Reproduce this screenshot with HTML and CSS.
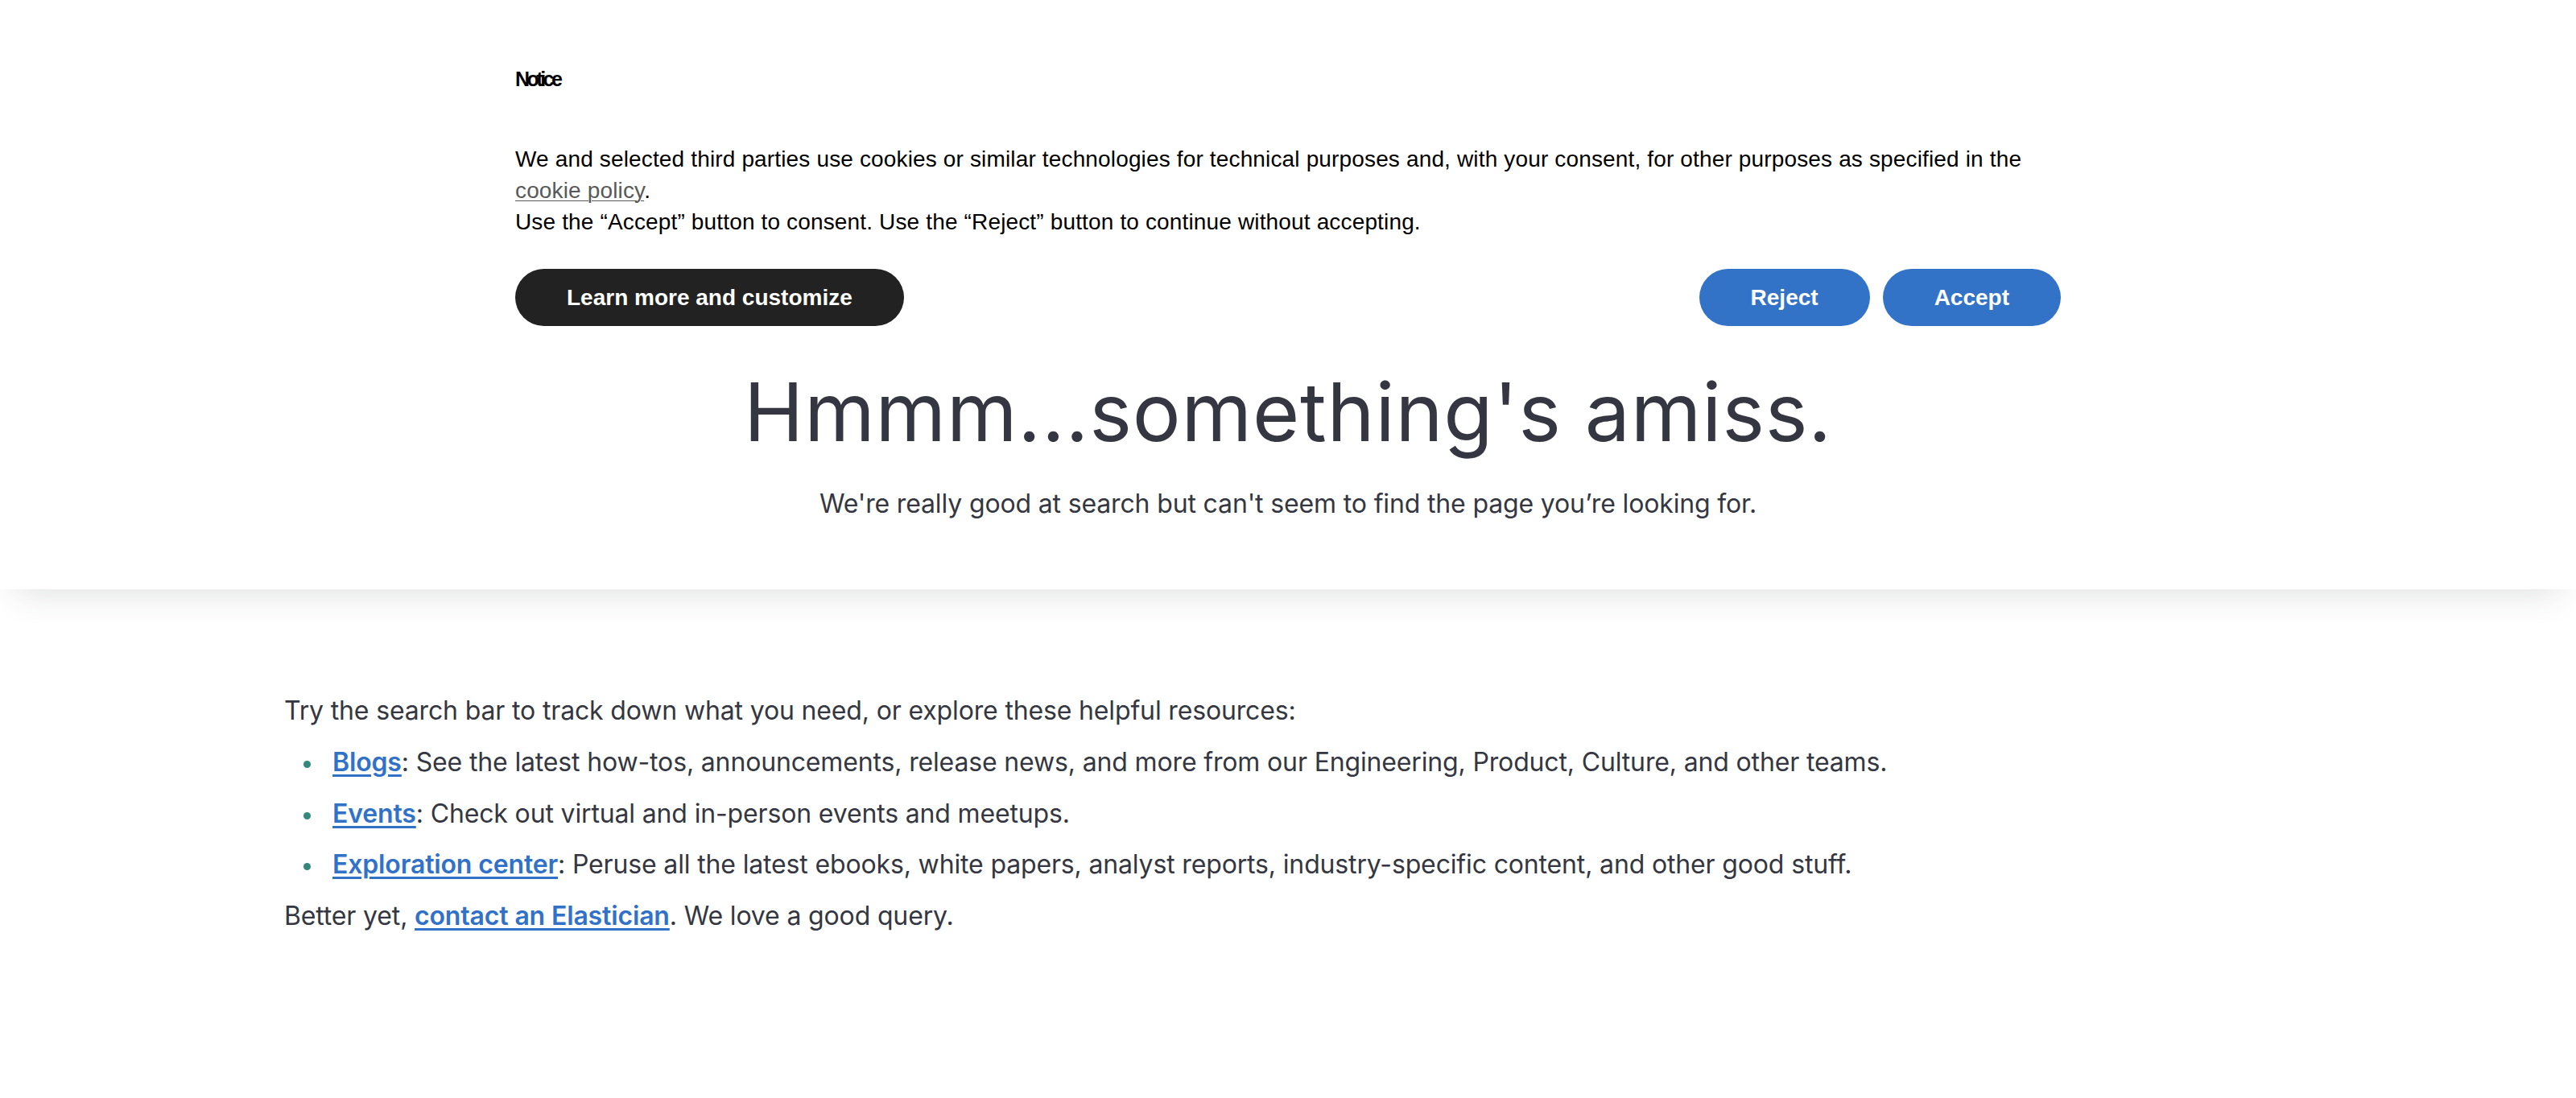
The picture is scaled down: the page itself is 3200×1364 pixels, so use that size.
FILE: index.html
```html
<!DOCTYPE html>
<html lang="en">
<head>
<meta charset="utf-8">
<title>Page not found</title>
<link rel="stylesheet" href="styles.css">
</head>
<body>
  <div class="cookie">
    <div class="cookie-inner">
      <p class="notice">Notice</p>
      <p class="cookie-text">We and selected third parties use cookies or similar technologies for technical purposes and, with your consent, for other purposes as specified in the <a class="cookie-link" href="#">cookie policy</a>.<br>Use the “Accept” button to consent. Use the “Reject” button to continue without accepting.</p>
      <div class="cookie-actions">
        <button class="btn btn-dark">Learn more and customize</button>
        <div class="btn-group">
          <button class="btn btn-blue">Reject</button>
          <button class="btn btn-blue">Accept</button>
        </div>
      </div>
    </div>
  </div>

  <section class="hero">
    <h1 class="hero-title">Hmmm...something's amiss.</h1>
    <p class="hero-sub">We're really good at search but can't seem to find the page you’re looking for.</p>
  </section>

  <main class="content">
    <p class="line">Try the search bar to track down what you need, or explore these helpful resources:</p>
    <ul class="resources">
      <li class="line"><a class="link" href="#">Blogs</a>: See the latest how-tos, announcements, release news, and more from our Engineering, Product, Culture, and other teams.</li>
      <li class="line"><a class="link" href="#">Events</a>: Check out virtual and in-person events and meetups.</li>
      <li class="line"><a class="link" href="#">Exploration center</a>: Peruse all the latest ebooks, white papers, analyst reports, industry-specific content, and other good stuff.</li>
    </ul>
    <p class="line">Better yet, <a class="link" href="#">contact an Elastician</a>. We love a good query.</p>
  </main>
</body>
</html>
```

FILE: styles.css
```css
html, body {
  margin: 0;
  padding: 0;
  background: #ffffff;
}

body {
  font-family: Inter, "Noto Sans", sans-serif;
  color: #343741;
}

/* Cookie notice */
.cookie {
  padding-top: 83px;
  font-family: "Liberation Sans", Arial, sans-serif;
  color: #000000;
}

.cookie-inner {
  width: 1920px;
  margin: 0 auto;
}

.notice {
  margin: 0;
  font-size: 25px;
  line-height: 30px;
  font-weight: 700;
  letter-spacing: -3.5px;
}

.cookie-text {
  margin: 65px 0 0;
  font-size: 28px;
  line-height: 39px;
  letter-spacing: 0.15px;
}

.cookie-link {
  color: #595959;
  text-decoration: underline;
  text-decoration-thickness: 1px;
  text-underline-offset: 3px;
}

.cookie-actions {
  margin-top: 39px;
  display: flex;
  justify-content: space-between;
  align-items: center;
}

.btn-group {
  display: flex;
  gap: 16px;
}

.btn {
  height: 71px;
  padding: 0 64px;
  border: none;
  border-radius: 999px;
  font-family: "Liberation Sans", Arial, sans-serif;
  font-size: 28px;
  font-weight: 700;
  color: #ffffff;
  display: inline-flex;
  align-items: center;
  justify-content: center;
  cursor: pointer;
}

.btn-dark {
  background: #222222;
}

.btn-blue {
  background: #3273c8;
}

/* Hero */
.hero {
  padding: 47px 0 82px;
  text-align: center;
  background: #ffffff;
  box-shadow: 0 24px 40px -20px rgba(52, 55, 65, 0.16);
}

.hero-title {
  margin: 0;
  font-size: 100px;
  line-height: 120px;
  font-weight: 400;
  letter-spacing: 0.8px;
  color: #343741;
}

.hero-sub {
  margin: 30px 0 0;
  font-size: 32px;
  line-height: 48px;
  letter-spacing: -0.15px;
  color: #343741;
}

/* Content */
.content {
  max-width: 2560px;
  margin: 0 auto;
  padding: 127px 33px 0;
  box-sizing: border-box;
}

.line {
  margin: 0 0 15.75px;
  font-size: 32px;
  line-height: 48px;
  letter-spacing: -0.15px;
  color: #343741;
}

.resources {
  margin: 0;
  padding: 0 0 0 60px;
  list-style: none;
}

.resources li {
  position: relative;
}

.resources li::before {
  content: "";
  position: absolute;
  left: -36px;
  top: 22px;
  width: 9px;
  height: 9px;
  border-radius: 50%;
  background: #33877b;
}

.link {
  color: #3172c8;
  font-weight: 600;
  text-decoration: underline;
  text-decoration-thickness: 3px;
  text-underline-offset: 4px;
}
```
